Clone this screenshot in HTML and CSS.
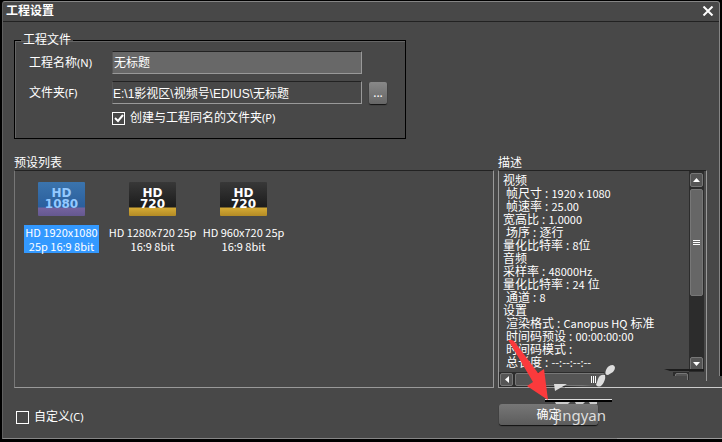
FILE: index.html
```html
<!DOCTYPE html>
<html lang="zh-CN">
<head>
  <meta charset="utf-8">
  <title>工程设置</title>
  <link rel="stylesheet" href="styles.css">
</head>
<body>
  <form class="dialog">
    <header class="titlebar">
      <h1>工程设置</h1>
      <button type="button" class="close" aria-label="关闭">
        <svg width="12" height="10" viewBox="0 0 12 10"><path d="M1.5 0.5L10.5 9.5M10.5 0.5L1.5 9.5" stroke="#fff" stroke-width="2"/></svg>
      </button>
    </header>

    <main class="content">
      <fieldset class="project">
        <legend>工程文件</legend>
        <div class="field">
          <label for="projectName">工程名称<span class="latin">(N)</span></label>
          <input type="text" class="name-input" id="projectName" value="无标题">
        </div>
        <div class="field">
          <label for="folder">文件夹<span class="latin">(F)</span></label>
          <input type="text" class="folder-input" id="folder" value="E:\1影视区\视频号\EDIUS\无标题">
          <button type="button" class="browse" aria-label="浏览">...</button>
        </div>
        <label class="check same-name"><input type="checkbox" checked>创建与工程同名的文件夹<span class="latin">(P)</span></label>
      </fieldset>

      <div class="panels">
        <section class="presets">
          <h2>预设列表</h2>
          <div class="preset-list">
            <button type="button" class="preset selected">
              <span class="badge">HD<br>1080</span>
              <span class="preset-name">HD 1920x1080<br>25p 16:9 8bit</span>
            </button>
            <button type="button" class="preset">
              <span class="badge">HD<br>720</span>
              <span class="preset-name">HD 1280x720 25p<br>16:9 8bit</span>
            </button>
            <button type="button" class="preset">
              <span class="badge">HD<br>720</span>
              <span class="preset-name">HD 960x720 25p<br>16:9 8bit</span>
            </button>
          </div>
        </section>

        <section class="description">
          <h2>描述</h2>
          <div class="description-box">
            <ul class="details">
              <li>视频</li>
              <li class="indent">帧尺寸 : <span class="latin">1920 x 1080</span></li>
              <li class="indent">帧速率 : <span class="latin">25.00</span></li>
              <li>宽高比 : <span class="latin">1.0000</span></li>
              <li class="indent">场序 : 逐行</li>
              <li>量化比特率 : <span class="latin">8</span>位</li>
              <li>音频</li>
              <li>采样率 : <span class="latin">48000Hz</span></li>
              <li>量化比特率 : <span class="latin">24</span> 位</li>
              <li class="indent">通道 : <span class="latin">8</span></li>
              <li>设置</li>
              <li class="indent">渲染格式 : <span class="latin">Canopus HQ</span> 标准</li>
              <li class="indent">时间码预设 : <span class="latin">00:00:00:00</span></li>
              <li class="indent">时间码模式 :</li>
              <li class="indent">总长度 : <span class="latin">--:--:--:--</span></li>
            </ul>
            <div class="scroll-y">
              <button type="button" class="arrow" aria-label="向上"><svg width="7" height="4"><path d="M3.5 0L7 4H0z" fill="#fff"/></svg></button>
              <div class="thumb"><svg width="7" height="6"><path d="M0 .5H7M0 2.5H7M0 4.5H7" stroke="#fff"/></svg></div>
              <button type="button" class="arrow" aria-label="向下"><svg width="7" height="4"><path d="M0 0H7L3.5 4z" fill="#fff"/></svg></button>
            </div>
            <div class="scroll-x">
              <button type="button" class="arrow" aria-label="向左"><svg width="4" height="7"><path d="M4 0V7L0 3.5z" fill="#fff"/></svg></button>
              <div class="thumb"><svg width="6" height="7"><path d="M.5 0V7M2.5 0V7M4.5 0V7" stroke="#fff"/></svg></div>
              <button type="button" class="arrow" aria-label="向右"></button>
            </div>
          </div>
        </section>
      </div>

      <footer class="actions">
        <label class="check"><input type="checkbox">自定义<span class="latin">(C)</span></label>
        <button type="button" class="ok">确定</button>
      </footer>
    </main>

    <!-- pointer and site mark lying over the corner -->
    <svg class="overlay" width="232" height="102" viewBox="490 340 232 102" aria-hidden="true">
      <path d="M606 369H664L673 372V376H687V380H703V381H708V376H722V439H617V403H600V387H567L598 385z" fill="#484848"/>
      <path d="M664 369H704V371H670z" fill="#1c1c1c"/>
      <path d="M565 387.500H722" stroke="#ccc"/>
      <path d="M617 438.500H722" stroke="#999"/>
      <path d="M545 399.500H612" stroke="#ddd"/>
      <path d="M545 401H612" stroke="#000" stroke-width="2"/>
      <path d="M606 370Q608 365 613 365Q617 367 613 372L608 375Q604 375 606 370zM598 379Q600 374 605 375Q606 380 602 385Q599 388 596 385z" fill="#ddd"/>
      <path d="M554 384H567L555 391z" fill="#ddd"/>
      <path d="M555 402H570L568 404H556zM575 402H585L583 404H576zM589 402H597V404H590z" fill="#ccc"/>
      <path d="M507 338L514 341L538 373L544 369L548 400L527 386L533 382z" fill="#fb3a3c"/>
    </svg>
    <span class="mark">jingyan</span>
  </form>
</body>
</html>
```

FILE: styles.css
```css
* {
  box-sizing: border-box;
}

body {
  margin: 0;
  padding: 1px 2px 3px;
  min-height: 100vh;
  display: flex;
  background-color: #000;
  color: #fff;
  font-family: "Noto Sans", "Noto Sans CJK SC", sans-serif;
  font-size: 12px;
  line-height: 14px;
}

button,
input {
  font: inherit;
  color: inherit;
  margin: 0;
  padding: 0;
}

button {
  border: none;
  background: none;
}

svg {
  display: block;
}

h1,
h2 {
  margin: 0;
  font-size: 12px;
}

h2 {
  font-weight: normal;
  line-height: 15px;
}

.latin {
  font-size: 11px;
}

.dialog {
  position: relative;
  flex: 1;
  display: flex;
  flex-direction: column;
  border: 1px solid #858585;
  border-left-color: #606060;
  border-radius: 3px 3px 0 0;
  background-color: #484848;
}

.titlebar {
  display: flex;
  align-items: center;
  justify-content: space-between;
  height: 20px;
  padding: 0 5px 2px 3px;
  border-bottom: 1px solid #222;
}

.content {
  flex: 1;
  display: flex;
  flex-direction: column;
  padding: 10px 12px 11px 11px;
}

.project {
  width: 392px;
  margin: 0;
  padding: 3px 18px 13px 14px;
  border: 1px solid #000;
  box-shadow: inset 1px 1px #666;
}

.project legend {
  padding: 0 2px;
  margin-left: -8px;
  line-height: 16px;
}

.field {
  display: flex;
  align-items: center;
  height: 23px;
  margin-bottom: 7px;
}

.field label {
  width: 83px;
}

.field input {
  width: 250px;
  height: 23px;
  padding: 0 1px 2px;
  border: 1px solid #999;
  border-top-color: #222;
  border-left-color: #555;
  background-color: #484848;
}

.field .name-input {
  background-color: #686868;
}

.field .folder-input {
  padding: 0;
  font-family: "Liberation Sans", "Noto Sans CJK SC", sans-serif;
}

.browse {
  width: 18px;
  height: 22px;
  margin-left: 7px;
  border-radius: 2px;
  background: linear-gradient(#888, #666);
  box-shadow: 0 1px 1px #111;
}

.check {
  display: flex;
  align-items: center;
}

.check input {
  appearance: none;
  width: 13px;
  height: 13px;
  margin-right: 5px;
  border: 1px solid #fff;
}

.check input:checked {
  background: url("data:image/svg+xml,%3Csvg xmlns='http://www.w3.org/2000/svg' viewBox='0 0 11 11'%3E%3Cpath d='M2 5l3 3 5-6' fill='none' stroke='white' stroke-width='2'/%3E%3C/svg%3E");
}

.same-name {
  margin-left: 83px;
}

.panels {
  flex: 1;
  display: flex;
  gap: 4px;
  margin-top: 16px;
}

.presets,
.description {
  display: flex;
  flex-direction: column;
}

.presets {
  flex: 1;
}

.description {
  width: 209px;
}

.preset-list {
  flex: 1;
  display: flex;
  align-items: flex-start;
  padding: 11px 0 0 1px;
  border: 1px solid #999;
  border-top-color: #222;
  border-left-color: #777;
}

.preset {
  width: 91px;
  display: flex;
  flex-direction: column;
  align-items: center;
  gap: 9px;
  font-family: "Noto Sans CJK SC", sans-serif;
  font-size: 11px;
  line-height: 14px;
  white-space: nowrap;
}

.badge {
  width: 47px;
  height: 34px;
  padding-top: 6px;
  border-radius: 1px;
  background: linear-gradient(#383838, #1c1c1c 25px, #d5aa35 26px, #b38b25);
  font-family: "DejaVu Sans", sans-serif;
  font-size: 12px;
  font-weight: bold;
  line-height: 11px;
}

.selected .badge {
  background: linear-gradient(#3b74ad, #2b5f9d 25px, #74639e 26px, #655890);
  color: #94c9ff;
}

.selected .preset-name {
  background-color: #3399ff;
}

.preset-name {
  padding: 0 1px;
}

.description-box {
  flex: 1;
  display: grid;
  grid-template-columns: 1fr 15px;
  grid-template-rows: 1fr 15px;
  padding-right: 2px;
  border: 1px solid #999;
  border-top-color: #222;
}

.details {
  height: 199px;
  margin: 0;
  padding: 3px 4px 0;
  overflow: hidden;
  list-style: none;
  line-height: 13px;
}

.details .indent {
  padding-left: 3px;
}

.details .latin {
  font-family: "Noto Sans CJK SC", sans-serif;
}

.scroll-y,
.scroll-x {
  display: flex;
  background-color: #2c2c2c;
}

.scroll-y {
  flex-direction: column;
  gap: 2px;
  padding: 2px 1px 1px;
}

.scroll-x {
  gap: 2px;
  padding: 1px;
}

.arrow,
.thumb {
  display: flex;
  align-items: center;
  justify-content: center;
  border: 1px solid #777;
  border-radius: 2px;
  background-color: #555;
}

.arrow {
  width: 13px;
  height: 14px;
}

.scroll-y .thumb {
  height: 107px;
  margin-bottom: auto;
  background-color: #666;
}

.scroll-x .arrow {
  height: 13px;
}

.scroll-x .thumb {
  flex: 1;
}

.actions {
  display: flex;
  align-items: center;
  height: 25px;
  margin-top: 14px;
}

.actions .check {
  width: 485px;
  padding: 5px 0 0 2px;
}

.ok {
  width: 99px;
  height: 21px;
  border-radius: 3px;
  background: linear-gradient(#777, #5c5c5c);
  box-shadow: 0 1px 1px #111;
}

.overlay {
  position: absolute;
  right: -3px;
  bottom: -4px;
}

.mark {
  position: absolute;
  right: 113px;
  bottom: 14px;
  color: #ddd;
  font-size: 15px;
  line-height: 18px;
}
```
